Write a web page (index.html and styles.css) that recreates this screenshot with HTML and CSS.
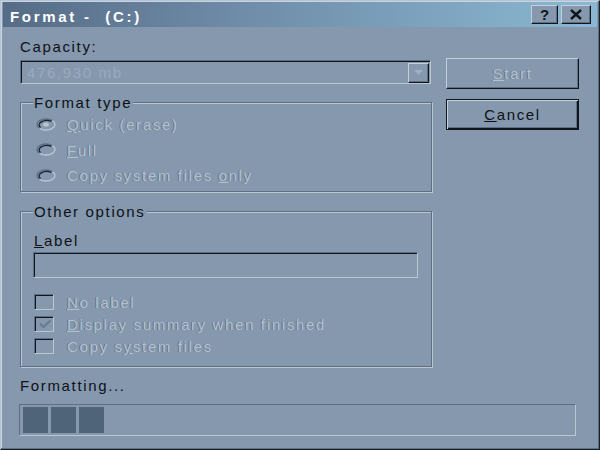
FILE: index.html
```html
<!DOCTYPE html>
<html>
<head>
<meta charset="utf-8">
<link rel="stylesheet" href="styles.css">
</head>
<body>
<div class="window">
  <div class="titlebar">
    <span class="title">Format -&nbsp; (C:)</span>
    <div class="tbtns">
      <span class="tbtn help">?</span>
      <span class="tbtn close"><svg width="14" height="11" viewBox="0 0 14 11"><path d="M2 1 L12 10 M12 1 L2 10" stroke="#10161c" stroke-width="2.4" fill="none"/></svg></span>
    </div>
  </div>
  <div class="body">
    <div class="main">
      <div class="left">
        <div class="lbl cap">Capacity:</div>
        <div class="combo">
          <span class="combo-text">476,930 mb</span>
          <span class="drop"><svg width="9" height="5" viewBox="0 0 9 5"><path d="M0 0 H9 L4.5 5 Z" fill="#9fb0c2"/></svg></span>
        </div>
        <fieldset class="group g1">
          <legend>Format type</legend>
          <div class="opt radio-row">
            <svg class="radio" width="20" height="13" viewBox="0 0 20 13"><path d="M3.6 10.4 A9 5.5 0 0 1 16.4 2.6" stroke="#5e6e84" stroke-width="1.3" fill="none"/><path d="M16.4 2.6 A9 5.5 0 0 1 3.6 10.4" stroke="#b9c7d5" stroke-width="1.3" fill="none"/><path d="M4.6 9.6 A7.8 4.4 0 0 1 15.4 3.4" stroke="#1a2028" stroke-width="1.3" fill="none"/><ellipse cx="10" cy="6.5" rx="3" ry="2" fill="#b8c5d2"/></svg>
            <span class="dis"><u>Q</u>uick (erase)</span>
          </div>
          <div class="opt radio-row">
            <svg class="radio" width="20" height="13" viewBox="0 0 20 13"><path d="M3.6 10.4 A9 5.5 0 0 1 16.4 2.6" stroke="#5e6e84" stroke-width="1.3" fill="none"/><path d="M16.4 2.6 A9 5.5 0 0 1 3.6 10.4" stroke="#b9c7d5" stroke-width="1.3" fill="none"/><path d="M4.6 9.6 A7.8 4.4 0 0 1 15.4 3.4" stroke="#1a2028" stroke-width="1.3" fill="none"/></svg>
            <span class="dis"><u>F</u>ull</span>
          </div>
          <div class="opt radio-row">
            <svg class="radio" width="20" height="13" viewBox="0 0 20 13"><path d="M3.6 10.4 A9 5.5 0 0 1 16.4 2.6" stroke="#5e6e84" stroke-width="1.3" fill="none"/><path d="M16.4 2.6 A9 5.5 0 0 1 3.6 10.4" stroke="#b9c7d5" stroke-width="1.3" fill="none"/><path d="M4.6 9.6 A7.8 4.4 0 0 1 15.4 3.4" stroke="#1a2028" stroke-width="1.3" fill="none"/></svg>
            <span class="dis">Copy system files <u>o</u>nly</span>
          </div>
        </fieldset>
        <fieldset class="group g2">
          <legend>Other options</legend>
          <div class="lbl label-lbl"><u>L</u>abel</div>
          <div class="textbox"></div>
          <div class="checks">
            <div class="opt check-row">
              <span class="box"></span>
              <span class="dis"><u>N</u>o label</span>
            </div>
            <div class="opt check-row">
              <span class="box"><svg width="14" height="11" viewBox="0 0 14 11"><path d="M2 4.5 L5.5 8 L12.5 1.5" stroke="#6a7b90" stroke-width="2.2" fill="none"/></svg></span>
              <span class="dis"><u>D</u>isplay summary when finished</span>
            </div>
            <div class="opt check-row">
              <span class="box"></span>
              <span class="dis">Copy s<u>y</u>stem files</span>
            </div>
          </div>
        </fieldset>
      </div>
      <div class="right">
        <div class="btn start"><span class="dis"><u>S</u>tart</span></div>
        <div class="btn cancel default"><span><u>C</u>ancel</span></div>
      </div>
    </div>
    <div class="lbl status">Formatting...</div>
    <div class="progress">
      <span class="block"></span><span class="block"></span><span class="block"></span>
    </div>
  </div>
</div>
</body>
</html>
```
FILE: styles.css
```css
* { box-sizing: border-box; }
html, body { margin: 0; padding: 0; }
body {
  width: 600px;
  height: 450px;
  overflow: hidden;
  background: #8598ae;
  font-family: "Liberation Sans", Arial, sans-serif;
  font-size: 15px;
  letter-spacing: 1.65px;
  color: #0e1216;
}
.window {
  width: 600px;
  height: 450px;
  border: 1px solid;
  border-color: #b4c4d4 #1a2028 #1a2028 #b4c4d4;
  box-shadow: inset -1px -1px 0 #5e6e84, inset 1px 1px 0 #c8d4e0;
  padding: 1px 2px 2px 2px;
  background: #8598ae;
}
.titlebar {
  height: 25px;
  background: linear-gradient(to right, #566c86 0%, #6f8ca8 40%, #8ab8d2 100%);
  display: flex;
  justify-content: space-between;
  padding: 6px 6px 0 7px;
}
.title {
  color: #ffffff;
  font-weight: bold;
  letter-spacing: 2.7px;
  line-height: 17px;
}
.tbtns {
  display: flex;
  gap: 3px;
  margin-top: -3px;
}
.tbtn {
  height: 19px;
  display: flex;
  align-items: center;
  justify-content: center;
  background: #8598ae;
  border: 1px solid;
  border-color: #c4d0dc #10161c #10161c #c4d0dc;
  box-shadow: inset -1px -1px 0 #5e6e84;
  font-weight: bold;
  font-size: 15px;
  letter-spacing: 0;
  color: #10161c;
}
.help { width: 27px; }
.close { width: 30px; }
.body {
  padding-left: 17px;
}
.main {
  display: flex;
  gap: 14px;
}
.left {
  width: 412px;
}
.lbl { line-height: 17px; }
.cap { margin-top: 11px; }
.combo {
  margin-top: 5px;
  width: 411px;
  height: 24px;
  border: 1px solid;
  border-color: #5e6e84 #b9c7d5 #b9c7d5 #5e6e84;
  box-shadow: inset 1px 1px 0 #10161c;
  display: flex;
  align-items: center;
  justify-content: space-between;
  padding: 0 1px 0 6px;
}
.combo-text {
  color: #9aaabc;
  line-height: 17px;
  padding-top: 1px;
}
.drop {
  width: 21px;
  height: 20px;
  margin-top: 1px;
  border: 1px solid;
  border-color: #c4d0dc #10161c #10161c #c4d0dc;
  box-shadow: inset -1px -1px 0 #5e6e84;
  display: flex;
  align-items: center;
  justify-content: center;
}
.group {
  margin: 0;
  width: 412px;
  border: 1px solid #5e6e84;
  box-shadow: inset 1px 1px 0 #b9c7d5, 1px 1px 0 #b9c7d5;
  padding: 0 12px;
  min-width: 0;
}
.group legend {
  padding: 0 1px;
  line-height: 15px;
  background: #8598ae;
  color: #0e1216;
}
.g1 {
  margin-top: 11px;
  padding-top: 2px;
  padding-bottom: 2px;
}
.g2 {
  margin-top: 12px;
  padding-top: 13px;
  padding-bottom: 9px;
}
.opt {
  display: flex;
  align-items: center;
}
.radio-row {
  height: 25.5px;
  padding-left: 3px;
}
.radio {
  flex: none;
  margin-right: 11px;
  margin-top: -1px;
}
.dis {
  color: #b3c1cf;
  text-shadow: -1px 0 0 rgba(84, 100, 120, 0.75);
  line-height: 17px;
}
.label-lbl { padding-left: 1px; }
.textbox {
  margin-top: 3px;
  width: 385px;
  height: 26px;
  border: 1px solid;
  border-color: #5e6e84 #b9c7d5 #b9c7d5 #5e6e84;
  box-shadow: inset 1px 1px 0 #10161c;
}
.checks {
  margin-top: 13.5px;
  padding-left: 1px;
}
.check-row {
  height: 22px;
}
.box {
  flex: none;
  width: 20px;
  height: 16px;
  margin-right: 13px;
  border: 1px solid;
  border-color: #5e6e84 #b9c7d5 #b9c7d5 #5e6e84;
  box-shadow: inset 1px 1px 0 #10161c;
  display: flex;
  align-items: center;
  justify-content: center;
  padding: 1px 0 0 1px;
}
.right {
  width: 133px;
  display: flex;
  flex-direction: column;
}
.btn {
  height: 31px;
  display: flex;
  align-items: center;
  justify-content: center;
  border: 1px solid;
  border-color: #c4d0dc #10161c #10161c #c4d0dc;
  box-shadow: inset -1px -1px 0 #5e6e84;
  line-height: 17px;
}
.start { margin-top: 31px; }
.cancel { margin-top: 10px; }
.default {
  border: 1px solid #10161c;
  box-shadow: inset 1px 1px 0 #c4d0dc, inset -1px -1px 0 #10161c, inset -2px -2px 0 #5e6e84;
}
.status {
  margin-top: 10px;
}
.progress {
  margin-top: 10px;
  margin-left: -1px;
  width: 557px;
  height: 32px;
  border: 1px solid;
  border-color: #5e6e84 #b9c7d5 #b9c7d5 #5e6e84;
  padding: 2px 3px;
  display: flex;
  gap: 3px;
}
.block {
  width: 25px;
  height: 26px;
  background: #4f6379;
}
```
